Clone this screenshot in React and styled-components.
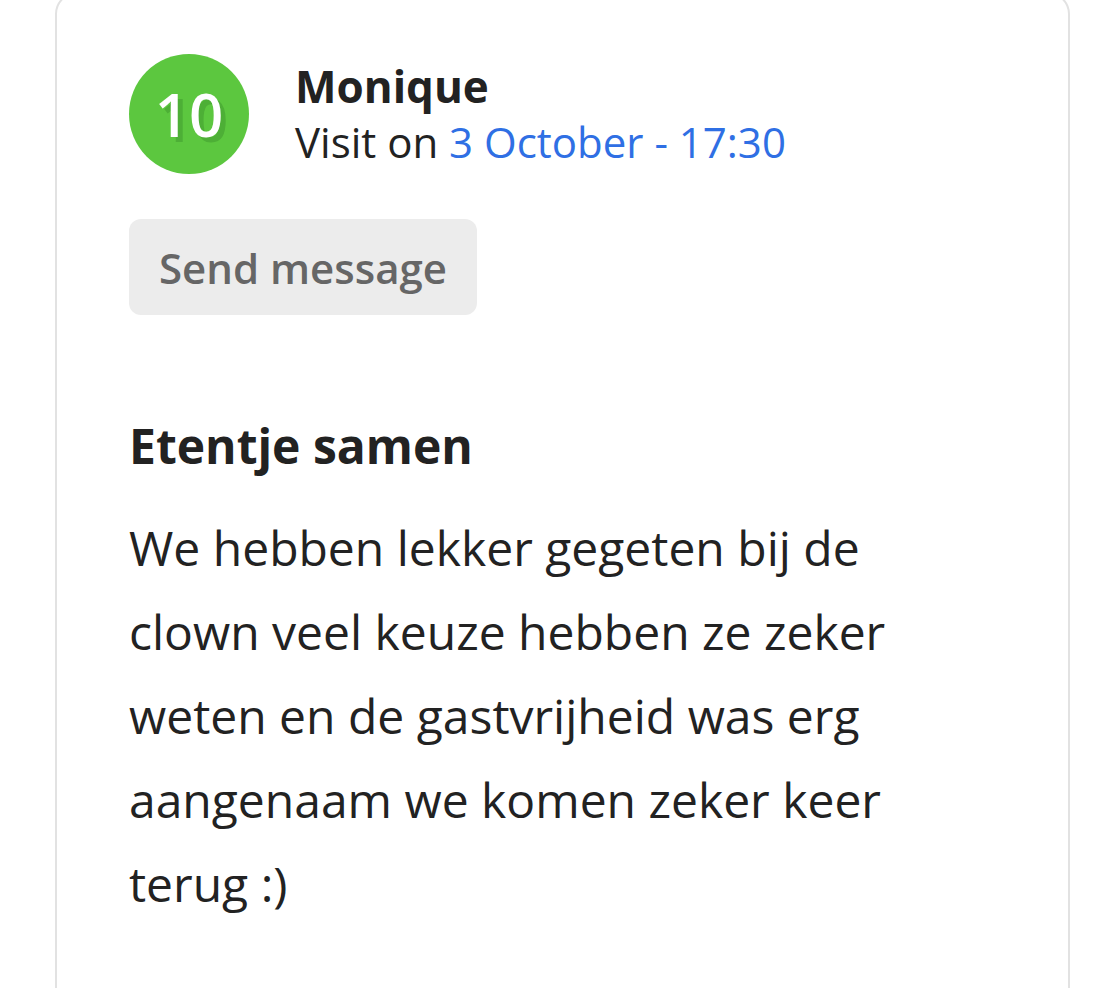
import styled, { createGlobalStyle } from "styled-components";

const GlobalStyle = createGlobalStyle`
  html, body {
    margin: 0;
    padding: 0;
    background: #fff;
  }
  body {
    font-family: "Open Sans", "Noto Sans", sans-serif;
    color: #222;
    overflow: hidden;
  }
`;

const Page = styled.div`
  padding: 0 49px 0 55px;
  height: 988px;
  overflow: hidden;
`;

const Card = styled.div`
  margin-top: -8px;
  min-height: 1040px;
  border: 2px solid #e2e2e2;
  border-radius: 22px;
  background: #fff;
  padding: 60px 72px 0 72px;
`;

const Header = styled.div`
  display: flex;
  align-items: center;
  gap: 46px;
`;

const Score = styled.div`
  width: 120px;
  height: 120px;
  border-radius: 50%;
  background: #5cc73f;
  color: #fff;
  display: flex;
  align-items: center;
  justify-content: center;
  font-size: 60px;
  font-weight: 600;
  text-shadow: 5px 5px 0 #4daf36;
  flex-shrink: 0;
`;

const Who = styled.div`
  display: flex;
  flex-direction: column;
`;

const Name = styled.div`
  font-size: 44px;
  font-weight: 700;
  line-height: 56px;
  color: #222;
`;

const Visit = styled.div`
  font-size: 42px;
  line-height: 56px;
  color: #222;
`;

const DateLink = styled.span`
  color: #2f6fe4;
`;

const Button = styled.button`
  margin-top: 45px;
  height: 96px;
  width: 348px;
  border: none;
  border-radius: 12px;
  background: #ececec;
  color: #666;
  font-family: inherit;
  font-size: 42px;
  font-weight: 600;
  padding: 0;
`;

const Title = styled.h3`
  margin: 101px 0 0 0;
  font-size: 48px;
  font-weight: 700;
  line-height: 60px;
  color: #222;
`;

const Body = styled.p`
  margin: 30px 0 0 0;
  font-size: 48px;
  line-height: 84px;
  color: #222;
  max-width: 800px;
`;

export default function App() {
  return (
    <>
      <GlobalStyle />
      <Page>
        <Card>
          <Header>
            <Score>10</Score>
            <Who>
              <Name>Monique</Name>
              <Visit>
                Visit on <DateLink>3 October - 17:30</DateLink>
              </Visit>
            </Who>
          </Header>
          <Button>Send message</Button>
          <Title>Etentje samen</Title>
          <Body>
            We hebben lekker gegeten bij de clown veel keuze hebben ze zeker
            weten en de gastvrijheid was erg aangenaam we komen zeker keer
            terug :)
          </Body>
        </Card>
      </Page>
    </>
  );
}
